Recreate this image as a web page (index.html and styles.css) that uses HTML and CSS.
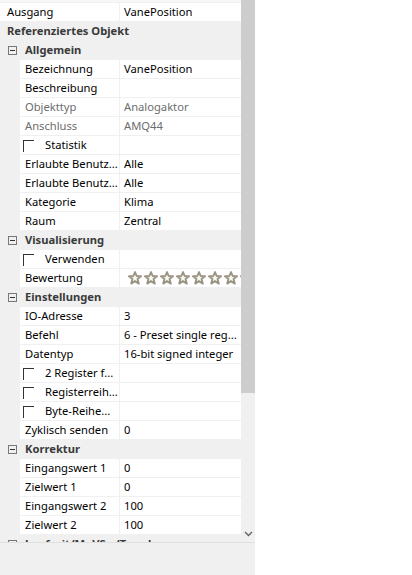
FILE: index.html
```html
<!DOCTYPE html>
<html lang="de">
<head>
<meta charset="utf-8">
<title>Eigenschaften</title>
<link rel="stylesheet" href="styles.css">
</head>
<body>
<div class="panel">
  <div class="grid-area">
    <div class="rows">
      <div class="top-gap"></div>
      <div class="row"><div class="label wide">Ausgang</div><div class="value">VanePosition</div></div>
      <div class="row cat"><span class="cat-title plain">Referenziertes Objekt</span></div>

      <div class="row cat"><span class="toggle"></span><span class="cat-title">Allgemein</span></div>
      <div class="row"><div class="indent"></div><div class="label">Bezeichnung</div><div class="value">VanePosition</div></div>
      <div class="row"><div class="indent"></div><div class="label">Beschreibung</div><div class="value"></div></div>
      <div class="row disabled"><div class="indent"></div><div class="label">Objekttyp</div><div class="value">Analogaktor</div></div>
      <div class="row disabled"><div class="indent"></div><div class="label">Anschluss</div><div class="value">AMQ44</div></div>
      <div class="row"><div class="indent"></div><div class="label check"><span class="box"></span>Statistik</div><div class="value"></div></div>
      <div class="row"><div class="indent"></div><div class="label">Erlaubte Benutz...</div><div class="value">Alle</div></div>
      <div class="row"><div class="indent"></div><div class="label">Erlaubte Benutz...</div><div class="value">Alle</div></div>
      <div class="row"><div class="indent"></div><div class="label">Kategorie</div><div class="value">Klima</div></div>
      <div class="row"><div class="indent"></div><div class="label">Raum</div><div class="value">Zentral</div></div>

      <div class="row cat"><span class="toggle"></span><span class="cat-title">Visualisierung</span></div>
      <div class="row"><div class="indent"></div><div class="label check"><span class="box"></span>Verwenden</div><div class="value"></div></div>
      <div class="row"><div class="indent"></div><div class="label">Bewertung</div>
        <div class="value stars">
          <svg viewBox="0 0 14 14" class="star"><polygon points="7,1 8.7,5 13,5.2 9.6,8 10.8,12.6 7,10.1 3.2,12.6 4.4,8 1,5.2 5.3,5"/></svg>
          <svg viewBox="0 0 14 14" class="star"><polygon points="7,1 8.7,5 13,5.2 9.6,8 10.8,12.6 7,10.1 3.2,12.6 4.4,8 1,5.2 5.3,5"/></svg>
          <svg viewBox="0 0 14 14" class="star"><polygon points="7,1 8.7,5 13,5.2 9.6,8 10.8,12.6 7,10.1 3.2,12.6 4.4,8 1,5.2 5.3,5"/></svg>
          <svg viewBox="0 0 14 14" class="star"><polygon points="7,1 8.7,5 13,5.2 9.6,8 10.8,12.6 7,10.1 3.2,12.6 4.4,8 1,5.2 5.3,5"/></svg>
          <svg viewBox="0 0 14 14" class="star"><polygon points="7,1 8.7,5 13,5.2 9.6,8 10.8,12.6 7,10.1 3.2,12.6 4.4,8 1,5.2 5.3,5"/></svg>
          <svg viewBox="0 0 14 14" class="star"><polygon points="7,1 8.7,5 13,5.2 9.6,8 10.8,12.6 7,10.1 3.2,12.6 4.4,8 1,5.2 5.3,5"/></svg>
          <svg viewBox="0 0 14 14" class="star"><polygon points="7,1 8.7,5 13,5.2 9.6,8 10.8,12.6 7,10.1 3.2,12.6 4.4,8 1,5.2 5.3,5"/></svg>
          <svg viewBox="0 0 14 14" class="star"><polygon points="7,1 8.7,5 13,5.2 9.6,8 10.8,12.6 7,10.1 3.2,12.6 4.4,8 1,5.2 5.3,5"/></svg>
          <svg viewBox="0 0 14 14" class="star"><polygon points="7,1 8.7,5 13,5.2 9.6,8 10.8,12.6 7,10.1 3.2,12.6 4.4,8 1,5.2 5.3,5"/></svg>
        </div>
      </div>

      <div class="row cat"><span class="toggle"></span><span class="cat-title">Einstellungen</span></div>
      <div class="row"><div class="indent"></div><div class="label">IO-Adresse</div><div class="value">3</div></div>
      <div class="row"><div class="indent"></div><div class="label">Befehl</div><div class="value">6 - Preset single reg...</div></div>
      <div class="row"><div class="indent"></div><div class="label">Datentyp</div><div class="value">16-bit signed integer</div></div>
      <div class="row"><div class="indent"></div><div class="label check"><span class="box"></span>2 Register f...</div><div class="value"></div></div>
      <div class="row"><div class="indent"></div><div class="label check"><span class="box"></span>Registerreih...</div><div class="value"></div></div>
      <div class="row"><div class="indent"></div><div class="label check"><span class="box"></span>Byte-Reihe...</div><div class="value"></div></div>
      <div class="row"><div class="indent"></div><div class="label">Zyklisch senden</div><div class="value">0</div></div>

      <div class="row cat"><span class="toggle"></span><span class="cat-title">Korrektur</span></div>
      <div class="row"><div class="indent"></div><div class="label">Eingangswert 1</div><div class="value">0</div></div>
      <div class="row"><div class="indent"></div><div class="label">Zielwert 1</div><div class="value">0</div></div>
      <div class="row"><div class="indent"></div><div class="label">Eingangswert 2</div><div class="value">100</div></div>
      <div class="row"><div class="indent"></div><div class="label">Zielwert 2</div><div class="value">100</div></div>
      <div class="row cat"><span class="toggle"></span><span class="cat-title">Laufzeit/MoVS.../Trend</span></div>
    </div>
    <div class="scrollbar">
      <div class="thumb"></div>
      <div class="track"></div>
      <div class="arrow"><svg viewBox="0 0 9 6" width="9" height="6"><polyline points="1,1 4.5,4.5 8,1" fill="none" stroke="#606060" stroke-width="1.3"/></svg></div>
    </div>
  </div>
  <div class="footer"></div>
</div>
</body>
</html>
```
FILE: styles.css
```css
html, body {
  margin: 0;
  padding: 0;
  background: #ffffff;
}
body {
  font-family: "Noto Sans", "Open Sans", sans-serif;
  font-size: 11.2px;
  color: #000;
}
.panel {
  width: 255px;
  height: 575px;
  display: flex;
  flex-direction: column;
}
.grid-area {
  height: 542px;
  display: flex;
  overflow: hidden;
}
.rows {
  width: 241px;
  flex: none;
  overflow: hidden;
  background: #f0f0f0;
}
.top-gap {
  height: 2px;
  background: #f7f7f7;
  border-bottom: 1px solid #f0f0f0;
}
.row {
  height: 18px;
  display: flex;
  align-items: stretch;
  border-bottom: 1px solid #f0f0f0;
  background: #fff;
  line-height: 18px;
  white-space: nowrap;
}
.indent {
  width: 20px;
  flex: none;
  background: #f0f0f0;
}
.label {
  width: 100px;
  flex: none;
  padding-left: 5px;
  box-sizing: border-box;
  border-right: 1px solid #f0f0f0;
  overflow: hidden;
  display: flex;
  align-items: center;
}
.label.wide {
  width: 120px;
  padding-left: 7px;
}
.value {
  flex: 1;
  padding-left: 4px;
  overflow: hidden;
  display: flex;
  align-items: center;
}
.disabled .label,
.disabled .value {
  color: #6d6d6d;
}
.check {
  padding-left: 3px;
}
.box {
  width: 10px;
  height: 11px;
  border-top: 1px solid #333;
  border-left: 1px solid #333;
  margin-right: 11px;
  margin-top: 2px;
  flex: none;
}
.cat {
  background: #f0f0f0;
  align-items: center;
  font-weight: 700;
  color: #3a3a3a;
}
.toggle {
  width: 9px;
  height: 9px;
  box-sizing: border-box;
  border: 1px solid #777;
  margin-left: 8px;
  margin-right: 8px;
  position: relative;
  flex: none;
}
.toggle::after {
  content: "";
  position: absolute;
  left: 1px;
  right: 1px;
  top: 3px;
  height: 1px;
  background: #333;
}
.cat-title {
  line-height: 18px;
}
.cat-title.plain {
  padding-left: 7px;
}
.stars {
  padding-left: 8px;
  gap: 2px;
}
.star {
  width: 14px;
  height: 14px;
  flex: none;
}
.star polygon {
  fill: #f7f5f0;
  stroke: #9a9482;
  stroke-width: 1.9;
  stroke-linejoin: round;
}
.scrollbar {
  width: 14px;
  flex: none;
  display: flex;
  flex-direction: column;
  background: #f0f0f0;
}
.thumb {
  height: 393px;
  background: #cdcdcd;
  flex: none;
}
.track {
  flex: 1;
}
.arrow {
  height: 17px;
  display: flex;
  align-items: center;
  justify-content: center;
}
.footer {
  flex: 1;
  background: #f0f0f0;
  border-top: 1px solid #e0e0e0;
}
```
